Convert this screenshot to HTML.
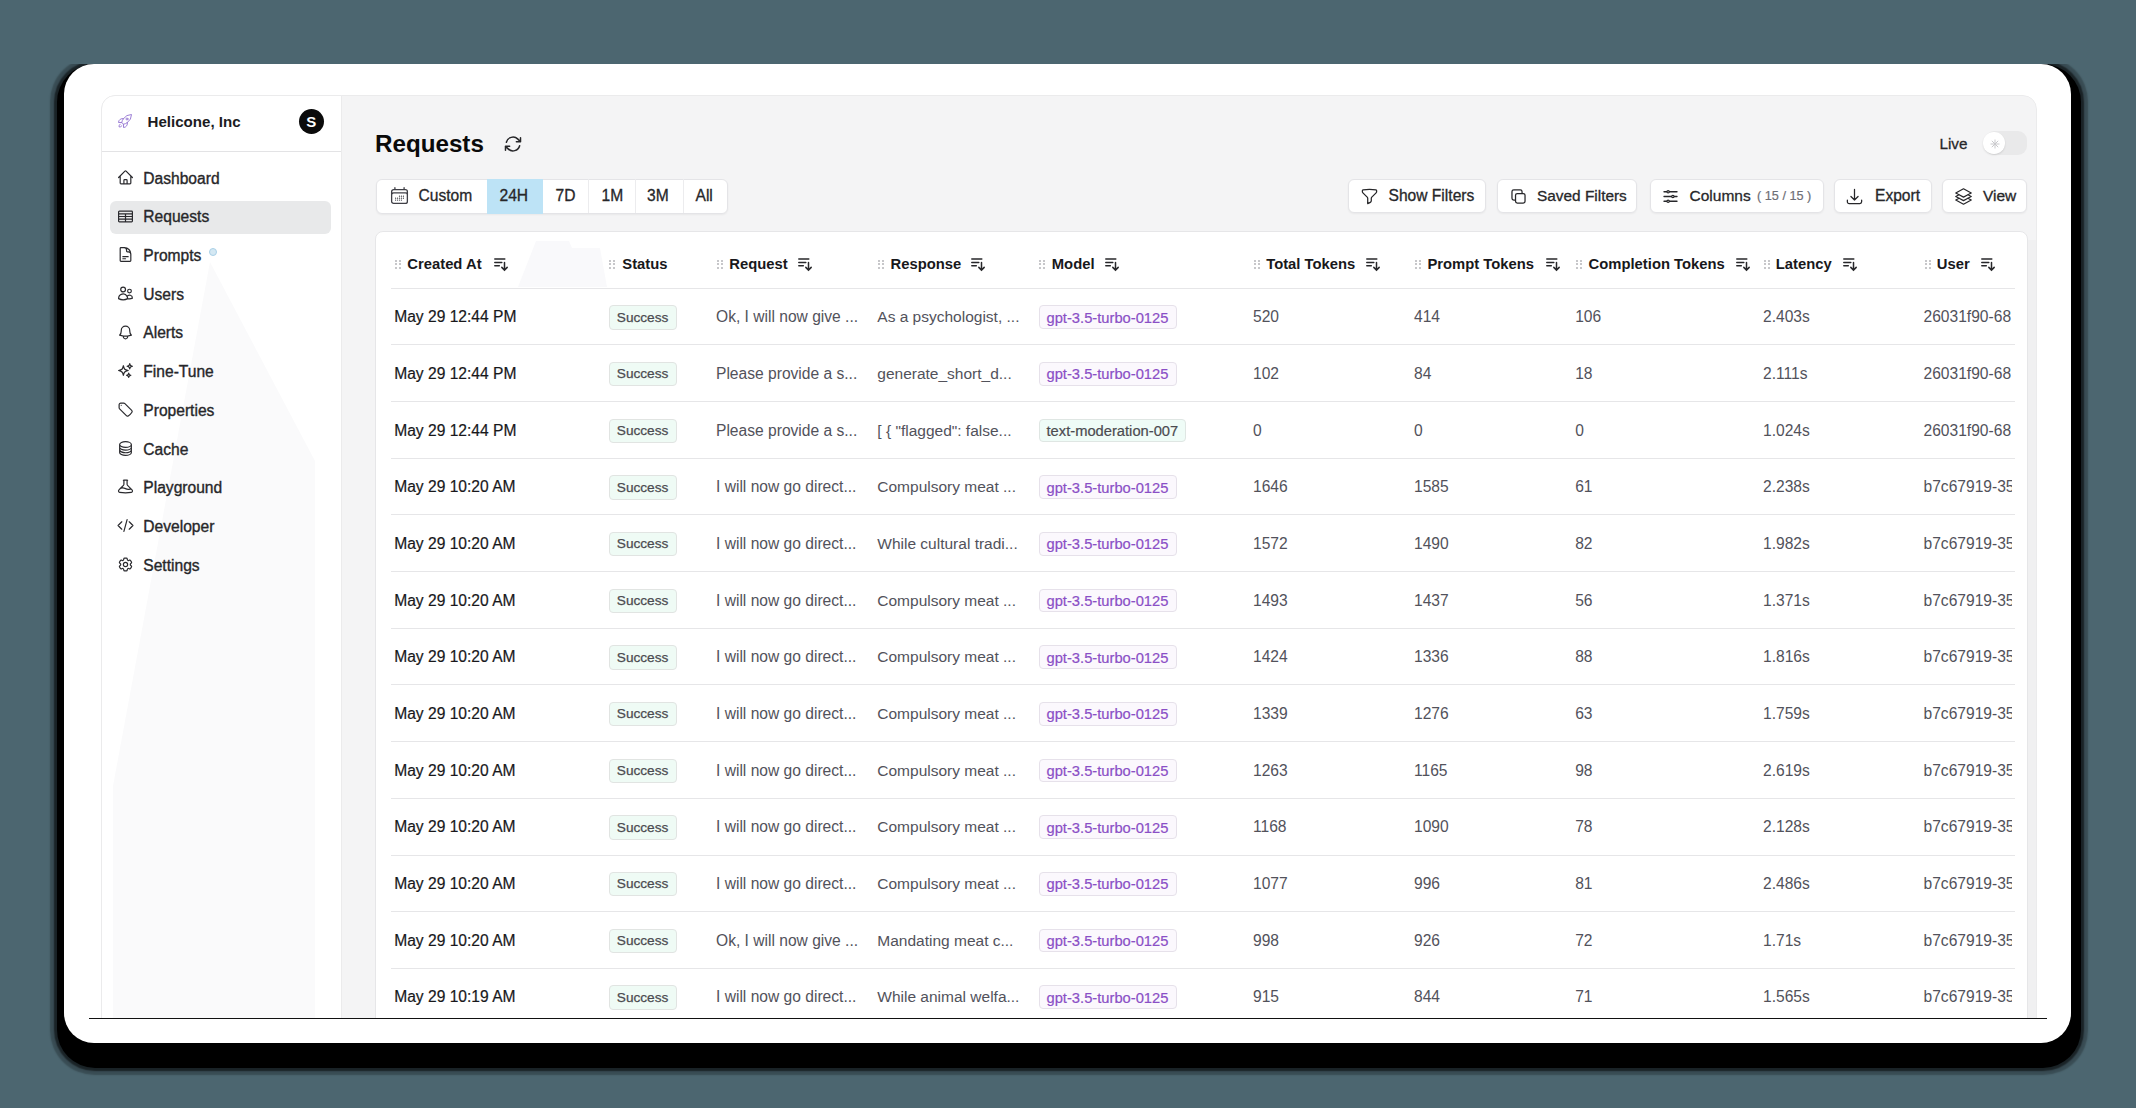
<!DOCTYPE html><html><head><meta charset="utf-8"><style>
*{margin:0;padding:0;box-sizing:border-box}
html,body{width:2136px;height:1108px;overflow:hidden}
body{background:#4c6670;font-family:"Liberation Sans",sans-serif;position:relative}
.t{position:absolute;white-space:nowrap}
.a{position:absolute}
svg{position:absolute;overflow:visible}
</style></head><body>
<div class="a" style="left:0;top:64px;width:2136px;height:1044px;overflow:hidden"><div class="a" style="left:57px;top:0px;width:2024px;height:1004px;border-radius:38px;background:#000;box-shadow:0 0 1.5px 3px rgba(0,0,0,.55),0 0 1.5px 6.5px rgba(0,0,0,.25)"></div></div>
<div class="a" style="left:64px;top:64px;width:2007px;height:979px;border-radius:30px;background:#fff"></div>
<div class="a" style="left:101px;top:95px;width:1936px;height:923px;overflow:hidden;border-radius:14px 14px 0 0">
<div class="a" style="left:-101px;top:-95px;width:2136px;height:1108px">
<div class="a" style="left:101px;top:95px;width:1936px;height:1000px;background:#f4f4f5;border:1.5px solid #ebebec;border-radius:14px"></div>
<div class="a" style="left:101px;top:95px;width:241px;height:1000px;background:#fff;border:1.5px solid #ebebec;border-right:1px solid #ebebec;border-radius:14px 0 0 14px"></div>
<svg width="2136" height="1108" style="left:0;top:0"><polygon points="210,262 315,461 315,1020 113,1020 113,786" fill="#fafafb"/></svg>
<div class="a" style="left:102px;top:151px;width:239px;height:1px;background:#e3e3e5"></div>
<svg width="16" height="16" viewBox="0 0 24 24" style="left:117px;top:113px" fill="none" stroke="#9d7fd6" stroke-width="1.5" stroke-linecap="round" stroke-linejoin="round"><path d="M15.59 14.37a6 6 0 0 1-5.84 7.38v-4.8m5.84-2.58a14.98 14.98 0 0 0 6.16-12.12A14.98 14.98 0 0 0 9.631 8.41m5.96 5.96a14.926 14.926 0 0 1-5.841 2.58m-.119-8.54a6 6 0 0 0-7.381 5.84h4.8m2.581-5.84a14.927 14.927 0 0 0-2.58 5.84m2.699 2.7c-.103.021-.207.041-.311.06a15.09 15.09 0 0 1-2.448-2.448 14.9 14.9 0 0 1 .06-.312m-2.24 2.39a4.493 4.493 0 0 0-1.757 4.306 4.493 4.493 0 0 0 4.306-1.758M16.5 9a1.5 1.5 0 1 1-3 0 1.5 1.5 0 0 1 3 0Z"/></svg>
<div class="t" style="left:147.50px;top:109.68px;height:24px;line-height:24px;font-size:15.1px;color:#1c1c1f;font-weight:bold;">Helicone, Inc</div>
<div class="a" style="left:298.5px;top:109px;width:25px;height:25px;border-radius:50%;background:#0b0b0b"></div>
<div class="t" style="left:304.30px;top:109.78px;height:24px;line-height:24px;font-size:15px;color:#fff;font-weight:bold;width:14px;text-align:center;">S</div>
<div class="a" style="left:109.5px;top:200.5px;width:221px;height:33px;border-radius:6px;background:#e8e9ea"></div>
<svg width="17" height="17" viewBox="0 0 24 24" style="left:117px;top:168.80px" fill="none" stroke="#2a2a2e" stroke-width="1.7" stroke-linecap="round" stroke-linejoin="round"><path d="m2.25 12 8.954-8.955c.44-.439 1.152-.439 1.591 0L21.75 12M4.5 9.75v10.125c0 .621.504 1.125 1.125 1.125H9.75v-4.875c0-.621.504-1.125 1.125-1.125h2.25c.621 0 1.125.504 1.125 1.125V21h4.125c.621 0 1.125-.504 1.125-1.125V9.75M8.25 21h8.25"/></svg>
<div class="t" style="left:143.30px;top:166.68px;height:24px;line-height:24px;font-size:15.6px;color:#27272a;font-weight:normal;-webkit-text-stroke:0.35px #27272a;">Dashboard</div>
<svg width="17" height="17" viewBox="0 0 24 24" style="left:117px;top:207.50px" fill="none" stroke="#2a2a2e" stroke-width="1.7" stroke-linecap="round" stroke-linejoin="round"><path d="M3.375 19.5h17.25m-17.25 0a1.125 1.125 0 0 1-1.125-1.125M3.375 19.5h7.5c.621 0 1.125-.504 1.125-1.125m-9.75 0V5.625m0 12.75v-1.5c0-.621.504-1.125 1.125-1.125m18.375 2.625V5.625m0 12.75c0 .621-.504 1.125-1.125 1.125m1.125-1.125v-1.5c0-.621-.504-1.125-1.125-1.125m0 3.75h-7.5A1.125 1.125 0 0 1 12 18.375m9.75-12.75c0-.621-.504-1.125-1.125-1.125H3.375c-.621 0-1.125.504-1.125 1.125m19.5 0v1.5c0 .621-.504 1.125-1.125 1.125M2.25 5.625v1.5c0 .621.504 1.125 1.125 1.125m0 0h17.25m-17.25 0h7.5c.621 0 1.125.504 1.125 1.125M3.375 8.25c-.621 0-1.125.504-1.125 1.125v1.5c0 .621.504 1.125 1.125 1.125m17.25-3.75h-7.5c-.621 0-1.125.504-1.125 1.125m8.625-1.125c.621 0 1.125.504 1.125 1.125v1.5c0 .621-.504 1.125-1.125 1.125m-17.25 0h7.5m-7.5 0c-.621 0-1.125.504-1.125 1.125v1.5c0 .621.504 1.125 1.125 1.125M12 10.875v-1.5m0 1.5c0 .621-.504 1.125-1.125 1.125M12 10.875c0 .621.504 1.125 1.125 1.125m-2.25 0c.621 0 1.125.504 1.125 1.125M13.125 12h7.5m-7.5 0c-.621 0-1.125.504-1.125 1.125M20.625 12c.621 0 1.125.504 1.125 1.125v1.5c0 .621-.504 1.125-1.125 1.125m-17.25 0h7.5M12 14.625v-1.5m0 1.5c0 .621-.504 1.125-1.125 1.125M12 14.625c0 .621.504 1.125 1.125 1.125m-2.25 0c.621 0 1.125.504 1.125 1.125m0 1.5v-1.5m0 0c0-.621.504-1.125 1.125-1.125m0 0h7.5"/></svg>
<div class="t" style="left:143.30px;top:205.38px;height:24px;line-height:24px;font-size:15.6px;color:#27272a;font-weight:normal;-webkit-text-stroke:0.35px #27272a;">Requests</div>
<svg width="17" height="17" viewBox="0 0 24 24" style="left:117px;top:246.20px" fill="none" stroke="#2a2a2e" stroke-width="1.7" stroke-linecap="round" stroke-linejoin="round"><path d="M19.5 14.25v-2.625a3.375 3.375 0 0 0-3.375-3.375h-1.5A1.125 1.125 0 0 1 13.5 7.125v-1.5a3.375 3.375 0 0 0-3.375-3.375H8.25m0 12.75h7.5m-7.5 3H12M10.5 2.25H5.625c-.621 0-1.125.504-1.125 1.125v17.25c0 .621.504 1.125 1.125 1.125h12.75c.621 0 1.125-.504 1.125-1.125V11.25a9 9 0 0 0-9-9Z"/></svg>
<div class="t" style="left:143.30px;top:244.08px;height:24px;line-height:24px;font-size:15.6px;color:#27272a;font-weight:normal;-webkit-text-stroke:0.35px #27272a;">Prompts</div>
<svg width="17" height="17" viewBox="0 0 24 24" style="left:117px;top:284.90px" fill="none" stroke="#2a2a2e" stroke-width="1.7" stroke-linecap="round" stroke-linejoin="round"><path d="M15 19.128a9.38 9.38 0 0 0 2.625.372 9.337 9.337 0 0 0 4.121-.952 4.125 4.125 0 0 0-7.533-2.493M15 19.128v-.003c0-1.113-.285-2.16-.786-3.07M15 19.128v.106A12.318 12.318 0 0 1 8.624 21c-2.331 0-4.512-.645-6.374-1.766l-.001-.109a6.375 6.375 0 0 1 11.964-3.07M12 6.375a3.375 3.375 0 1 1-6.75 0 3.375 3.375 0 0 1 6.75 0Zm8.25 2.25a2.625 2.625 0 1 1-5.25 0 2.625 2.625 0 0 1 5.25 0Z"/></svg>
<div class="t" style="left:143.30px;top:282.78px;height:24px;line-height:24px;font-size:15.6px;color:#27272a;font-weight:normal;-webkit-text-stroke:0.35px #27272a;">Users</div>
<svg width="17" height="17" viewBox="0 0 24 24" style="left:117px;top:323.60px" fill="none" stroke="#2a2a2e" stroke-width="1.7" stroke-linecap="round" stroke-linejoin="round"><path d="M14.857 17.082a23.848 23.848 0 0 0 5.454-1.31A8.967 8.967 0 0 1 18 9.75V9A6 6 0 0 0 6 9v.75a8.967 8.967 0 0 1-2.312 6.022c1.733.64 3.56 1.085 5.455 1.31m5.714 0a24.255 24.255 0 0 1-5.714 0m5.714 0a3 3 0 1 1-5.714 0"/></svg>
<div class="t" style="left:143.30px;top:321.48px;height:24px;line-height:24px;font-size:15.6px;color:#27272a;font-weight:normal;-webkit-text-stroke:0.35px #27272a;">Alerts</div>
<svg width="17" height="17" viewBox="0 0 24 24" style="left:117px;top:362.30px" fill="none" stroke="#2a2a2e" stroke-width="1.7" stroke-linecap="round" stroke-linejoin="round"><path d="M9.813 15.904 9 18.75l-.813-2.846a4.5 4.5 0 0 0-3.09-3.09L2.25 12l2.846-.813a4.5 4.5 0 0 0 3.09-3.09L9 5.25l.813 2.846a4.5 4.5 0 0 0 3.09 3.09L15.75 12l-2.846.813a4.5 4.5 0 0 0-3.09 3.09ZM18.259 8.715 18 9.75l-.259-1.035a3.375 3.375 0 0 0-2.455-2.456L14.25 6l1.036-.259a3.375 3.375 0 0 0 2.455-2.456L18 2.25l.259 1.035a3.375 3.375 0 0 0 2.456 2.456L21.75 6l-1.035.259a3.375 3.375 0 0 0-2.456 2.456ZM16.894 20.567 16.5 21.75l-.394-1.183a2.25 2.25 0 0 0-1.423-1.423L13.5 18.75l1.183-.394a2.25 2.25 0 0 0 1.423-1.423l.394-1.183.394 1.183a2.25 2.25 0 0 0 1.423 1.423l1.183.394-1.183.394a2.25 2.25 0 0 0-1.423 1.423Z"/></svg>
<div class="t" style="left:143.30px;top:360.18px;height:24px;line-height:24px;font-size:15.6px;color:#27272a;font-weight:normal;-webkit-text-stroke:0.35px #27272a;">Fine-Tune</div>
<svg width="17" height="17" viewBox="0 0 24 24" style="left:117px;top:401.00px" fill="none" stroke="#2a2a2e" stroke-width="1.7" stroke-linecap="round" stroke-linejoin="round"><path d="M9.568 3H5.25A2.25 2.25 0 0 0 3 5.25v4.318c0 .597.237 1.17.659 1.591l9.581 9.581c.699.699 1.78.872 2.607.33a18.095 18.095 0 0 0 5.223-5.223c.542-.827.369-1.908-.33-2.607L11.16 3.66A2.25 2.25 0 0 0 9.568 3Z"/><path d="M6 6h.008v.008H6V6Z"/></svg>
<div class="t" style="left:143.30px;top:398.88px;height:24px;line-height:24px;font-size:15.6px;color:#27272a;font-weight:normal;-webkit-text-stroke:0.35px #27272a;">Properties</div>
<svg width="17" height="17" viewBox="0 0 24 24" style="left:117px;top:439.70px" fill="none" stroke="#2a2a2e" stroke-width="1.7" stroke-linecap="round" stroke-linejoin="round"><path d="M20.25 6.375c0 2.278-3.694 4.125-8.25 4.125S3.75 8.653 3.75 6.375m16.5 0c0-2.278-3.694-4.125-8.25-4.125S3.75 4.097 3.75 6.375m16.5 0v11.25c0 2.278-3.694 4.125-8.25 4.125s-8.25-1.847-8.25-4.125V6.375m16.5 0v3.75m-16.5-3.75v3.75m16.5 0v3.75C20.25 16.153 16.556 18 12 18s-8.25-1.847-8.25-4.125v-3.75m16.5 0c0 2.278-3.694 4.125-8.25 4.125s-8.25-1.847-8.25-4.125"/></svg>
<div class="t" style="left:143.30px;top:437.58px;height:24px;line-height:24px;font-size:15.6px;color:#27272a;font-weight:normal;-webkit-text-stroke:0.35px #27272a;">Cache</div>
<svg width="17" height="17" viewBox="0 0 24 24" style="left:117px;top:478.40px" fill="none" stroke="#2a2a2e" stroke-width="1.7" stroke-linecap="round" stroke-linejoin="round"><path d="M9.75 3.104v5.714a2.25 2.25 0 0 1-.659 1.591L5 14.5M9.75 3.104c-.251.023-.501.05-.75.082m.75-.082a24.301 24.301 0 0 1 4.5 0m0 0v5.714c0 .597.237 1.17.659 1.591L19.8 15.3M14.25 3.104c.251.023.501.05.75.082M19.8 15.3l-1.57.393A9.065 9.065 0 0 1 12 15a9.065 9.065 0 0 0-6.23-.693L5 14.5m14.8.8 1.402 1.402c1.232 1.232.65 3.318-1.067 3.611A48.309 48.309 0 0 1 12 21c-2.773 0-5.491-.235-8.135-.687-1.718-.293-2.3-2.379-1.067-3.61L5 14.5"/></svg>
<div class="t" style="left:143.30px;top:476.28px;height:24px;line-height:24px;font-size:15.6px;color:#27272a;font-weight:normal;-webkit-text-stroke:0.35px #27272a;">Playground</div>
<svg width="17" height="17" viewBox="0 0 24 24" style="left:117px;top:517.10px" fill="none" stroke="#2a2a2e" stroke-width="1.7" stroke-linecap="round" stroke-linejoin="round"><path d="M17.25 6.75 22.5 12l-5.25 5.25m-10.5 0L1.5 12l5.25-5.25m7.5-3-4.5 16.5"/></svg>
<div class="t" style="left:143.30px;top:514.98px;height:24px;line-height:24px;font-size:15.6px;color:#27272a;font-weight:normal;-webkit-text-stroke:0.35px #27272a;">Developer</div>
<svg width="17" height="17" viewBox="0 0 24 24" style="left:117px;top:555.80px" fill="none" stroke="#2a2a2e" stroke-width="1.7" stroke-linecap="round" stroke-linejoin="round"><path d="M9.594 3.94c.09-.542.56-.94 1.11-.94h2.593c.55 0 1.02.398 1.11.94l.213 1.281c.063.374.313.686.645.87.074.04.147.083.22.127.325.196.72.257 1.075.124l1.217-.456a1.125 1.125 0 0 1 1.37.49l1.296 2.247a1.125 1.125 0 0 1-.26 1.431l-1.003.827c-.293.241-.438.613-.43.992a7.723 7.723 0 0 1 0 .255c-.008.378.137.75.43.991l1.004.827c.424.35.534.955.26 1.43l-1.298 2.247a1.125 1.125 0 0 1-1.369.491l-1.217-.456c-.355-.133-.75-.072-1.076.124a6.47 6.47 0 0 1-.22.128c-.331.183-.581.495-.644.869l-.213 1.281c-.09.543-.56.94-1.11.94h-2.594c-.55 0-1.019-.398-1.11-.94l-.213-1.281c-.062-.374-.312-.686-.644-.87a6.52 6.52 0 0 1-.22-.127c-.325-.196-.72-.257-1.076-.124l-1.217.456a1.125 1.125 0 0 1-1.369-.49l-1.297-2.247a1.125 1.125 0 0 1 .26-1.431l1.004-.827c.292-.24.437-.613.43-.991a6.932 6.932 0 0 1 0-.255c.007-.38-.138-.751-.43-.992l-1.004-.827a1.125 1.125 0 0 1-.26-1.43l1.297-2.247a1.125 1.125 0 0 1 1.37-.491l1.216.456c.356.133.751.072 1.076-.124.072-.044.146-.086.22-.128.332-.183.582-.495.644-.869l.214-1.28Z"/><path d="M15 12a3 3 0 1 1-6 0 3 3 0 0 1 6 0Z"/></svg>
<div class="t" style="left:143.30px;top:553.68px;height:24px;line-height:24px;font-size:15.6px;color:#27272a;font-weight:normal;-webkit-text-stroke:0.35px #27272a;">Settings</div>
<div class="a" style="left:209px;top:248px;width:8px;height:8px;border-radius:50%;background:#d4e8f3;border:1.5px solid #a9d0e6"></div>
<div class="t" style="left:375.00px;top:128.38px;height:32px;line-height:32px;font-size:24.2px;color:#0a0a0a;font-weight:bold;">Requests</div>
<svg width="20" height="20" viewBox="0 0 24 24" style="left:502.5px;top:133.5px" fill="none" stroke="#27272a" stroke-width="1.8" stroke-linecap="round" stroke-linejoin="round"><path d="M16.023 9.348h4.992v-.001M2.985 19.644v-4.992m0 0h4.992m-4.993 0 3.181 3.183a8.25 8.25 0 0 0 13.803-3.7M4.031 9.865a8.25 8.25 0 0 1 13.803-3.7l3.181 3.182m0-4.991v4.99"/></svg>
<div class="t" style="left:1939.50px;top:131.98px;height:24px;line-height:24px;font-size:15.26px;color:#27272a;font-weight:normal;-webkit-text-stroke:0.3px currentColor;">Live</div>
<div class="a" style="left:1985px;top:131px;width:42px;height:24px;border-radius:9px;background:#e9e9ea"></div>
<div class="a" style="left:1983px;top:132px;width:21.5px;height:21.5px;border-radius:50%;background:#fff;box-shadow:0 1px 2px rgba(0,0,0,.12)"></div>
<svg width="10" height="10" viewBox="0 0 10 10" style="left:1989.5px;top:138.5px" stroke="#c9c9cc" stroke-width="1"><path d="M5 0.5v9M0.5 5h9M1.8 1.8l6.4 6.4M8.2 1.8l-6.4 6.4"/></svg>
<div class="a" style="left:375.5px;top:178.5px;width:352px;height:35px;border-radius:6px;background:#fff;border:1px solid #e4e4e7;box-shadow:0 1px 2px rgba(0,0,0,.05)"></div>
<div class="a" style="left:486.5px;top:178.5px;width:56px;height:35px;background:#bde3f6"></div>
<div class="a" style="left:588px;top:179px;width:1px;height:34px;background:#ececee"></div>
<div class="a" style="left:635px;top:179px;width:1px;height:34px;background:#ececee"></div>
<div class="a" style="left:683px;top:179px;width:1px;height:34px;background:#ececee"></div>
<svg width="21" height="21" viewBox="0 0 24 24" style="left:388.5px;top:185px" fill="none" stroke="#3f3f46" stroke-width="1.5" stroke-linecap="round" stroke-linejoin="round"><path d="M6.75 3v2.25M17.25 3v2.25M3 18.75V7.5a2.25 2.25 0 0 1 2.25-2.25h13.5A2.25 2.25 0 0 1 21 7.5v11.25m-18 0A2.25 2.25 0 0 0 5.25 21h13.5A2.25 2.25 0 0 0 21 18.75m-18 0v-7.5A2.25 2.25 0 0 1 5.25 9h13.5A2.25 2.25 0 0 1 21 11.25v7.5m-9-6h.008v.008H12v-.008ZM12 15h.008v.008H12V15Zm0 2.25h.008v.008H12v-.008ZM9.75 15h.008v.008H9.75V15Zm0 2.25h.008v.008H9.75v-.008ZM7.5 15h.008v.008H7.5V15Zm0 2.25h.008v.008H7.5v-.008Zm6.75-4.5h.008v.008h-.008v-.008Zm0 2.25h.008v.008h-.008V15Zm0 2.25h.008v.008h-.008v-.008Zm2.25-4.5h.008v.008H16.5v-.008Zm0 2.25h.008v.008H16.5V15Z"/></svg>
<div class="t" style="left:418.50px;top:184.48px;height:24px;line-height:24px;font-size:15.6px;color:#27272a;font-weight:normal;-webkit-text-stroke:0.3px currentColor;">Custom</div>
<div class="t" style="left:499.50px;top:184.48px;height:24px;line-height:24px;font-size:15.6px;color:#27272a;font-weight:normal;-webkit-text-stroke:0.3px currentColor;">24H</div>
<div class="t" style="left:555.50px;top:184.48px;height:24px;line-height:24px;font-size:15.6px;color:#27272a;font-weight:normal;-webkit-text-stroke:0.3px currentColor;">7D</div>
<div class="t" style="left:601.50px;top:184.48px;height:24px;line-height:24px;font-size:15.6px;color:#27272a;font-weight:normal;-webkit-text-stroke:0.3px currentColor;">1M</div>
<div class="t" style="left:647.00px;top:184.48px;height:24px;line-height:24px;font-size:15.6px;color:#27272a;font-weight:normal;-webkit-text-stroke:0.3px currentColor;">3M</div>
<div class="t" style="left:695.50px;top:184.48px;height:24px;line-height:24px;font-size:15.6px;color:#27272a;font-weight:normal;-webkit-text-stroke:0.3px currentColor;">All</div>
<div class="a" style="left:1348px;top:179px;width:138px;height:34px;border-radius:6px;background:#fff;border:1px solid #e4e4e7;box-shadow:0 1px 2px rgba(0,0,0,.05)"></div>
<div class="a" style="left:1496.5px;top:179px;width:140.5px;height:34px;border-radius:6px;background:#fff;border:1px solid #e4e4e7;box-shadow:0 1px 2px rgba(0,0,0,.05)"></div>
<div class="a" style="left:1649.5px;top:179px;width:174.5px;height:34px;border-radius:6px;background:#fff;border:1px solid #e4e4e7;box-shadow:0 1px 2px rgba(0,0,0,.05)"></div>
<div class="a" style="left:1833.5px;top:179px;width:98.5px;height:34px;border-radius:6px;background:#fff;border:1px solid #e4e4e7;box-shadow:0 1px 2px rgba(0,0,0,.05)"></div>
<div class="a" style="left:1941.5px;top:179px;width:85.0px;height:34px;border-radius:6px;background:#fff;border:1px solid #e4e4e7;box-shadow:0 1px 2px rgba(0,0,0,.05)"></div>
<svg width="19" height="19" viewBox="0 0 24 24" style="left:1359.5px;top:186.5px" fill="none" stroke="#27272a" stroke-width="1.6" stroke-linecap="round" stroke-linejoin="round"><path d="M12 3c2.755 0 5.455.232 8.083.678.533.09.917.556.917 1.096v1.044a2.25 2.25 0 0 1-.659 1.591l-5.432 5.432a2.25 2.25 0 0 0-.659 1.591v2.927a2.25 2.25 0 0 1-1.244 2.013L9.75 21v-6.568a2.25 2.25 0 0 0-.659-1.591L3.659 7.409A2.25 2.25 0 0 1 3 5.818V4.774c0-.54.384-1.006.917-1.096A48.32 48.32 0 0 1 12 3Z"/></svg>
<div class="t" style="left:1388.50px;top:184.48px;height:24px;line-height:24px;font-size:15.6px;color:#27272a;font-weight:normal;-webkit-text-stroke:0.3px currentColor;">Show Filters</div>
<svg width="19" height="19" viewBox="0 0 24 24" style="left:1508.5px;top:186.5px" fill="none" stroke="#27272a" stroke-width="1.6" stroke-linecap="round" stroke-linejoin="round"><path d="M16.5 8.25V6a2.25 2.25 0 0 0-2.25-2.25H6A2.25 2.25 0 0 0 3.75 6v8.25A2.25 2.25 0 0 0 6 16.5h2.25m8.25-8.25H18a2.25 2.25 0 0 1 2.25 2.25V18A2.25 2.25 0 0 1 18 20.25h-7.5A2.25 2.25 0 0 1 8.25 18v-1.5m8.25-8.25h-6a2.25 2.25 0 0 0-2.25 2.25v6"/></svg>
<div class="t" style="left:1537.00px;top:184.48px;height:24px;line-height:24px;font-size:15.4px;color:#27272a;font-weight:normal;-webkit-text-stroke:0.3px currentColor;">Saved Filters</div>
<svg width="19" height="19" viewBox="0 0 24 24" style="left:1660.5px;top:186.5px" fill="none" stroke="#27272a" stroke-width="1.6" stroke-linecap="round" stroke-linejoin="round"><path d="M10.5 6h9.75M10.5 6a1.5 1.5 0 1 1-3 0m3 0a1.5 1.5 0 1 0-3 0M3.75 6H7.5m3 12h9.75m-9.75 0a1.5 1.5 0 0 1-3 0m3 0a1.5 1.5 0 0 0-3 0m-3.75 0H7.5m9-6h3.75m-3.75 0a1.5 1.5 0 0 1-3 0m3 0a1.5 1.5 0 0 0-3 0m-9.75 0h9.75"/></svg>
<div class="t" style="left:1689.50px;top:184.48px;height:24px;line-height:24px;font-size:15.5px;color:#27272a;font-weight:normal;-webkit-text-stroke:0.3px currentColor;">Columns</div>
<div class="t" style="left:1757.00px;top:184.48px;height:24px;line-height:24px;font-size:12.7px;color:#6e6e75;font-weight:normal;-webkit-text-stroke:0.2px currentColor;">( 15 / 15 )</div>
<svg width="19" height="19" viewBox="0 0 24 24" style="left:1844.5px;top:186.5px" fill="none" stroke="#27272a" stroke-width="1.6" stroke-linecap="round" stroke-linejoin="round"><path d="M3 16.5v2.25A2.25 2.25 0 0 0 5.25 21h13.5A2.25 2.25 0 0 0 21 18.75V16.5M16.5 12 12 16.5m0 0L7.5 12m4.5 4.5V3"/></svg>
<div class="t" style="left:1875.00px;top:184.48px;height:24px;line-height:24px;font-size:15.6px;color:#27272a;font-weight:normal;-webkit-text-stroke:0.3px currentColor;">Export</div>
<svg width="19" height="19" viewBox="0 0 24 24" style="left:1953.5px;top:186.5px" fill="none" stroke="#27272a" stroke-width="1.6" stroke-linecap="round" stroke-linejoin="round"><path d="M6.429 9.75 2.25 12l4.179 2.25m0-4.5 5.571 3 5.571-3m-11.142 0L2.25 7.5 12 2.25l9.75 5.25-4.179 2.25m0 0L21.75 12l-4.179 2.25m0 0 4.179 2.25L12 21.75 2.25 16.5l4.179-2.25m11.142 0-5.571 3-5.571-3"/></svg>
<div class="t" style="left:1983.00px;top:184.48px;height:24px;line-height:24px;font-size:15.5px;color:#27272a;font-weight:normal;-webkit-text-stroke:0.3px currentColor;">View</div>
<div class="a" style="left:375px;top:231px;width:1653px;height:900px;border-radius:8px;background:#fff;border:1.5px solid #e6e6e8"></div>
<svg width="2136" height="1108" style="left:0;top:0"><polygon points="536,241 569,241 572,248 600,248 607,287 518,287" fill="#f9f9fb"/></svg>
<div class="a" style="left:2028px;top:240px;width:8px;height:800px;background:#f0f0f1"></div>
<div class="a" style="left:395.20px;top:259.70px;width:2px;height:2px;border-radius:50%;background:#b4b4b9"></div>
<div class="a" style="left:399.20px;top:259.70px;width:2px;height:2px;border-radius:50%;background:#b4b4b9"></div>
<div class="a" style="left:395.20px;top:263.40px;width:2px;height:2px;border-radius:50%;background:#b4b4b9"></div>
<div class="a" style="left:399.20px;top:263.40px;width:2px;height:2px;border-radius:50%;background:#b4b4b9"></div>
<div class="a" style="left:395.20px;top:267.10px;width:2px;height:2px;border-radius:50%;background:#b4b4b9"></div>
<div class="a" style="left:399.20px;top:267.10px;width:2px;height:2px;border-radius:50%;background:#b4b4b9"></div>
<div class="t" style="left:407.30px;top:252.18px;height:24px;line-height:24px;font-size:14.8px;color:#18181b;font-weight:bold;">Created At</div>
<svg width="15" height="13" viewBox="0 0 15 13" style="left:494.00px;top:257.5px" fill="none" stroke="#27272a" stroke-width="1.5" stroke-linecap="round"><path d="M0.8 1h10M0.8 4.4h7M0.8 7.8h4.5M10.5 4.6v7.4M7.8 9.4l2.7 2.7 2.7-2.7"/></svg>
<div class="a" style="left:609.20px;top:259.70px;width:2px;height:2px;border-radius:50%;background:#b4b4b9"></div>
<div class="a" style="left:613.20px;top:259.70px;width:2px;height:2px;border-radius:50%;background:#b4b4b9"></div>
<div class="a" style="left:609.20px;top:263.40px;width:2px;height:2px;border-radius:50%;background:#b4b4b9"></div>
<div class="a" style="left:613.20px;top:263.40px;width:2px;height:2px;border-radius:50%;background:#b4b4b9"></div>
<div class="a" style="left:609.20px;top:267.10px;width:2px;height:2px;border-radius:50%;background:#b4b4b9"></div>
<div class="a" style="left:613.20px;top:267.10px;width:2px;height:2px;border-radius:50%;background:#b4b4b9"></div>
<div class="t" style="left:622.30px;top:252.18px;height:24px;line-height:24px;font-size:14.8px;color:#18181b;font-weight:bold;">Status</div>
<div class="a" style="left:717.00px;top:259.70px;width:2px;height:2px;border-radius:50%;background:#b4b4b9"></div>
<div class="a" style="left:721.00px;top:259.70px;width:2px;height:2px;border-radius:50%;background:#b4b4b9"></div>
<div class="a" style="left:717.00px;top:263.40px;width:2px;height:2px;border-radius:50%;background:#b4b4b9"></div>
<div class="a" style="left:721.00px;top:263.40px;width:2px;height:2px;border-radius:50%;background:#b4b4b9"></div>
<div class="a" style="left:717.00px;top:267.10px;width:2px;height:2px;border-radius:50%;background:#b4b4b9"></div>
<div class="a" style="left:721.00px;top:267.10px;width:2px;height:2px;border-radius:50%;background:#b4b4b9"></div>
<div class="t" style="left:729.30px;top:252.18px;height:24px;line-height:24px;font-size:14.8px;color:#18181b;font-weight:bold;">Request</div>
<svg width="15" height="13" viewBox="0 0 15 13" style="left:798.40px;top:257.5px" fill="none" stroke="#27272a" stroke-width="1.5" stroke-linecap="round"><path d="M0.8 1h10M0.8 4.4h7M0.8 7.8h4.5M10.5 4.6v7.4M7.8 9.4l2.7 2.7 2.7-2.7"/></svg>
<div class="a" style="left:878.00px;top:259.70px;width:2px;height:2px;border-radius:50%;background:#b4b4b9"></div>
<div class="a" style="left:882.00px;top:259.70px;width:2px;height:2px;border-radius:50%;background:#b4b4b9"></div>
<div class="a" style="left:878.00px;top:263.40px;width:2px;height:2px;border-radius:50%;background:#b4b4b9"></div>
<div class="a" style="left:882.00px;top:263.40px;width:2px;height:2px;border-radius:50%;background:#b4b4b9"></div>
<div class="a" style="left:878.00px;top:267.10px;width:2px;height:2px;border-radius:50%;background:#b4b4b9"></div>
<div class="a" style="left:882.00px;top:267.10px;width:2px;height:2px;border-radius:50%;background:#b4b4b9"></div>
<div class="t" style="left:890.50px;top:252.18px;height:24px;line-height:24px;font-size:14.8px;color:#18181b;font-weight:bold;">Response</div>
<svg width="15" height="13" viewBox="0 0 15 13" style="left:971.40px;top:257.5px" fill="none" stroke="#27272a" stroke-width="1.5" stroke-linecap="round"><path d="M0.8 1h10M0.8 4.4h7M0.8 7.8h4.5M10.5 4.6v7.4M7.8 9.4l2.7 2.7 2.7-2.7"/></svg>
<div class="a" style="left:1039.20px;top:259.70px;width:2px;height:2px;border-radius:50%;background:#b4b4b9"></div>
<div class="a" style="left:1043.20px;top:259.70px;width:2px;height:2px;border-radius:50%;background:#b4b4b9"></div>
<div class="a" style="left:1039.20px;top:263.40px;width:2px;height:2px;border-radius:50%;background:#b4b4b9"></div>
<div class="a" style="left:1043.20px;top:263.40px;width:2px;height:2px;border-radius:50%;background:#b4b4b9"></div>
<div class="a" style="left:1039.20px;top:267.10px;width:2px;height:2px;border-radius:50%;background:#b4b4b9"></div>
<div class="a" style="left:1043.20px;top:267.10px;width:2px;height:2px;border-radius:50%;background:#b4b4b9"></div>
<div class="t" style="left:1051.80px;top:252.18px;height:24px;line-height:24px;font-size:14.8px;color:#18181b;font-weight:bold;">Model</div>
<svg width="15" height="13" viewBox="0 0 15 13" style="left:1105.00px;top:257.5px" fill="none" stroke="#27272a" stroke-width="1.5" stroke-linecap="round"><path d="M0.8 1h10M0.8 4.4h7M0.8 7.8h4.5M10.5 4.6v7.4M7.8 9.4l2.7 2.7 2.7-2.7"/></svg>
<div class="a" style="left:1254.20px;top:259.70px;width:2px;height:2px;border-radius:50%;background:#b4b4b9"></div>
<div class="a" style="left:1258.20px;top:259.70px;width:2px;height:2px;border-radius:50%;background:#b4b4b9"></div>
<div class="a" style="left:1254.20px;top:263.40px;width:2px;height:2px;border-radius:50%;background:#b4b4b9"></div>
<div class="a" style="left:1258.20px;top:263.40px;width:2px;height:2px;border-radius:50%;background:#b4b4b9"></div>
<div class="a" style="left:1254.20px;top:267.10px;width:2px;height:2px;border-radius:50%;background:#b4b4b9"></div>
<div class="a" style="left:1258.20px;top:267.10px;width:2px;height:2px;border-radius:50%;background:#b4b4b9"></div>
<div class="t" style="left:1266.20px;top:252.18px;height:24px;line-height:24px;font-size:14.8px;color:#18181b;font-weight:bold;">Total Tokens</div>
<svg width="15" height="13" viewBox="0 0 15 13" style="left:1366.00px;top:257.5px" fill="none" stroke="#27272a" stroke-width="1.5" stroke-linecap="round"><path d="M0.8 1h10M0.8 4.4h7M0.8 7.8h4.5M10.5 4.6v7.4M7.8 9.4l2.7 2.7 2.7-2.7"/></svg>
<div class="a" style="left:1415.20px;top:259.70px;width:2px;height:2px;border-radius:50%;background:#b4b4b9"></div>
<div class="a" style="left:1419.20px;top:259.70px;width:2px;height:2px;border-radius:50%;background:#b4b4b9"></div>
<div class="a" style="left:1415.20px;top:263.40px;width:2px;height:2px;border-radius:50%;background:#b4b4b9"></div>
<div class="a" style="left:1419.20px;top:263.40px;width:2px;height:2px;border-radius:50%;background:#b4b4b9"></div>
<div class="a" style="left:1415.20px;top:267.10px;width:2px;height:2px;border-radius:50%;background:#b4b4b9"></div>
<div class="a" style="left:1419.20px;top:267.10px;width:2px;height:2px;border-radius:50%;background:#b4b4b9"></div>
<div class="t" style="left:1427.40px;top:252.18px;height:24px;line-height:24px;font-size:14.8px;color:#18181b;font-weight:bold;">Prompt Tokens</div>
<svg width="15" height="13" viewBox="0 0 15 13" style="left:1546.00px;top:257.5px" fill="none" stroke="#27272a" stroke-width="1.5" stroke-linecap="round"><path d="M0.8 1h10M0.8 4.4h7M0.8 7.8h4.5M10.5 4.6v7.4M7.8 9.4l2.7 2.7 2.7-2.7"/></svg>
<div class="a" style="left:1576.40px;top:259.70px;width:2px;height:2px;border-radius:50%;background:#b4b4b9"></div>
<div class="a" style="left:1580.40px;top:259.70px;width:2px;height:2px;border-radius:50%;background:#b4b4b9"></div>
<div class="a" style="left:1576.40px;top:263.40px;width:2px;height:2px;border-radius:50%;background:#b4b4b9"></div>
<div class="a" style="left:1580.40px;top:263.40px;width:2px;height:2px;border-radius:50%;background:#b4b4b9"></div>
<div class="a" style="left:1576.40px;top:267.10px;width:2px;height:2px;border-radius:50%;background:#b4b4b9"></div>
<div class="a" style="left:1580.40px;top:267.10px;width:2px;height:2px;border-radius:50%;background:#b4b4b9"></div>
<div class="t" style="left:1588.60px;top:252.18px;height:24px;line-height:24px;font-size:14.8px;color:#18181b;font-weight:bold;">Completion Tokens</div>
<svg width="15" height="13" viewBox="0 0 15 13" style="left:1736.00px;top:257.5px" fill="none" stroke="#27272a" stroke-width="1.5" stroke-linecap="round"><path d="M0.8 1h10M0.8 4.4h7M0.8 7.8h4.5M10.5 4.6v7.4M7.8 9.4l2.7 2.7 2.7-2.7"/></svg>
<div class="a" style="left:1763.60px;top:259.70px;width:2px;height:2px;border-radius:50%;background:#b4b4b9"></div>
<div class="a" style="left:1767.60px;top:259.70px;width:2px;height:2px;border-radius:50%;background:#b4b4b9"></div>
<div class="a" style="left:1763.60px;top:263.40px;width:2px;height:2px;border-radius:50%;background:#b4b4b9"></div>
<div class="a" style="left:1767.60px;top:263.40px;width:2px;height:2px;border-radius:50%;background:#b4b4b9"></div>
<div class="a" style="left:1763.60px;top:267.10px;width:2px;height:2px;border-radius:50%;background:#b4b4b9"></div>
<div class="a" style="left:1767.60px;top:267.10px;width:2px;height:2px;border-radius:50%;background:#b4b4b9"></div>
<div class="t" style="left:1775.80px;top:252.18px;height:24px;line-height:24px;font-size:14.8px;color:#18181b;font-weight:bold;">Latency</div>
<svg width="15" height="13" viewBox="0 0 15 13" style="left:1843.40px;top:257.5px" fill="none" stroke="#27272a" stroke-width="1.5" stroke-linecap="round"><path d="M0.8 1h10M0.8 4.4h7M0.8 7.8h4.5M10.5 4.6v7.4M7.8 9.4l2.7 2.7 2.7-2.7"/></svg>
<div class="a" style="left:1925.40px;top:259.70px;width:2px;height:2px;border-radius:50%;background:#b4b4b9"></div>
<div class="a" style="left:1929.40px;top:259.70px;width:2px;height:2px;border-radius:50%;background:#b4b4b9"></div>
<div class="a" style="left:1925.40px;top:263.40px;width:2px;height:2px;border-radius:50%;background:#b4b4b9"></div>
<div class="a" style="left:1929.40px;top:263.40px;width:2px;height:2px;border-radius:50%;background:#b4b4b9"></div>
<div class="a" style="left:1925.40px;top:267.10px;width:2px;height:2px;border-radius:50%;background:#b4b4b9"></div>
<div class="a" style="left:1929.40px;top:267.10px;width:2px;height:2px;border-radius:50%;background:#b4b4b9"></div>
<div class="t" style="left:1936.80px;top:252.18px;height:24px;line-height:24px;font-size:14.8px;color:#18181b;font-weight:bold;">User</div>
<svg width="15" height="13" viewBox="0 0 15 13" style="left:1981.00px;top:257.5px" fill="none" stroke="#27272a" stroke-width="1.5" stroke-linecap="round"><path d="M0.8 1h10M0.8 4.4h7M0.8 7.8h4.5M10.5 4.6v7.4M7.8 9.4l2.7 2.7 2.7-2.7"/></svg>
<div class="a" style="left:391px;top:287.8px;width:1624px;height:1px;background:#e6e6e8"></div>
<div class="t" style="left:394.20px;top:305.38px;height:24px;line-height:24px;font-size:15.6px;color:#18181b;font-weight:normal;-webkit-text-stroke:0.2px currentColor;">May 29 12:44 PM</div>
<div class="a" style="left:609px;top:305.20px;width:68px;height:24.5px;border-radius:4px;background:#effbf5;border:1.2px solid #e1e4e2"></div>
<div class="t" style="left:616.80px;top:305.58px;height:24px;line-height:24px;font-size:13.65px;color:#4b4b50;font-weight:normal;-webkit-text-stroke:0.25px currentColor;">Success</div>
<div class="t" style="left:716.00px;top:305.38px;height:24px;line-height:24px;font-size:15.6px;color:#52525b;font-weight:normal;">Ok, I will now give ...</div>
<div class="t" style="left:877.30px;top:305.38px;height:24px;line-height:24px;font-size:15.5px;color:#52525b;font-weight:normal;">As a psychologist, ...</div>
<div class="a" style="left:1038.5px;top:305.40px;width:138px;height:23.5px;border-radius:4px;background:#fbf8fd;border:1.2px solid #e6e1ea"></div>
<div class="t" style="left:1046.50px;top:305.68px;height:24px;line-height:24px;font-size:14.72px;color:#8a4fc6;font-weight:normal;-webkit-text-stroke:0.2px currentColor;">gpt-3.5-turbo-0125</div>
<div class="t" style="left:1253.00px;top:305.38px;height:24px;line-height:24px;font-size:15.6px;color:#52525b;font-weight:normal;">520</div>
<div class="t" style="left:1414.00px;top:305.38px;height:24px;line-height:24px;font-size:15.6px;color:#52525b;font-weight:normal;">414</div>
<div class="t" style="left:1575.20px;top:305.38px;height:24px;line-height:24px;font-size:15.6px;color:#52525b;font-weight:normal;">106</div>
<div class="t" style="left:1763.00px;top:305.38px;height:24px;line-height:24px;font-size:15.6px;color:#52525b;font-weight:normal;">2.403s</div>
<div class="a" style="left:1923px;top:305.20px;width:88.5px;height:24px;overflow:hidden"><div class="t" style="left:0.50px;top:0.18px;height:24px;line-height:24px;font-size:15.6px;color:#52525b;font-weight:normal;">26031f90-68</div>
</div>
<div class="a" style="left:391px;top:344.47px;width:1624px;height:1px;background:#e6e6e8"></div>
<div class="t" style="left:394.20px;top:362.05px;height:24px;line-height:24px;font-size:15.6px;color:#18181b;font-weight:normal;-webkit-text-stroke:0.2px currentColor;">May 29 12:44 PM</div>
<div class="a" style="left:609px;top:361.87px;width:68px;height:24.5px;border-radius:4px;background:#effbf5;border:1.2px solid #e1e4e2"></div>
<div class="t" style="left:616.80px;top:362.25px;height:24px;line-height:24px;font-size:13.65px;color:#4b4b50;font-weight:normal;-webkit-text-stroke:0.25px currentColor;">Success</div>
<div class="t" style="left:716.00px;top:362.05px;height:24px;line-height:24px;font-size:15.6px;color:#52525b;font-weight:normal;">Please provide a s...</div>
<div class="t" style="left:877.30px;top:362.05px;height:24px;line-height:24px;font-size:15.5px;color:#52525b;font-weight:normal;">generate_short_d...</div>
<div class="a" style="left:1038.5px;top:362.07px;width:138px;height:23.5px;border-radius:4px;background:#fbf8fd;border:1.2px solid #e6e1ea"></div>
<div class="t" style="left:1046.50px;top:362.35px;height:24px;line-height:24px;font-size:14.72px;color:#8a4fc6;font-weight:normal;-webkit-text-stroke:0.2px currentColor;">gpt-3.5-turbo-0125</div>
<div class="t" style="left:1253.00px;top:362.05px;height:24px;line-height:24px;font-size:15.6px;color:#52525b;font-weight:normal;">102</div>
<div class="t" style="left:1414.00px;top:362.05px;height:24px;line-height:24px;font-size:15.6px;color:#52525b;font-weight:normal;">84</div>
<div class="t" style="left:1575.20px;top:362.05px;height:24px;line-height:24px;font-size:15.6px;color:#52525b;font-weight:normal;">18</div>
<div class="t" style="left:1763.00px;top:362.05px;height:24px;line-height:24px;font-size:15.6px;color:#52525b;font-weight:normal;">2.111s</div>
<div class="a" style="left:1923px;top:361.87px;width:88.5px;height:24px;overflow:hidden"><div class="t" style="left:0.50px;top:0.18px;height:24px;line-height:24px;font-size:15.6px;color:#52525b;font-weight:normal;">26031f90-68</div>
</div>
<div class="a" style="left:391px;top:401.14px;width:1624px;height:1px;background:#e6e6e8"></div>
<div class="t" style="left:394.20px;top:418.72px;height:24px;line-height:24px;font-size:15.6px;color:#18181b;font-weight:normal;-webkit-text-stroke:0.2px currentColor;">May 29 12:44 PM</div>
<div class="a" style="left:609px;top:418.54px;width:68px;height:24.5px;border-radius:4px;background:#effbf5;border:1.2px solid #e1e4e2"></div>
<div class="t" style="left:616.80px;top:418.92px;height:24px;line-height:24px;font-size:13.65px;color:#4b4b50;font-weight:normal;-webkit-text-stroke:0.25px currentColor;">Success</div>
<div class="t" style="left:716.00px;top:418.72px;height:24px;line-height:24px;font-size:15.6px;color:#52525b;font-weight:normal;">Please provide a s...</div>
<div class="t" style="left:877.30px;top:418.72px;height:24px;line-height:24px;font-size:15.5px;color:#52525b;font-weight:normal;">[ { "flagged": false...</div>
<div class="a" style="left:1038.5px;top:418.74px;width:147px;height:23.5px;border-radius:4px;background:#effcf7;border:1.2px solid #dfe6e3"></div>
<div class="t" style="left:1046.50px;top:419.02px;height:24px;line-height:24px;font-size:14.72px;color:#4b4b50;font-weight:normal;-webkit-text-stroke:0.2px currentColor;">text-moderation-007</div>
<div class="t" style="left:1253.00px;top:418.72px;height:24px;line-height:24px;font-size:15.6px;color:#52525b;font-weight:normal;">0</div>
<div class="t" style="left:1414.00px;top:418.72px;height:24px;line-height:24px;font-size:15.6px;color:#52525b;font-weight:normal;">0</div>
<div class="t" style="left:1575.20px;top:418.72px;height:24px;line-height:24px;font-size:15.6px;color:#52525b;font-weight:normal;">0</div>
<div class="t" style="left:1763.00px;top:418.72px;height:24px;line-height:24px;font-size:15.6px;color:#52525b;font-weight:normal;">1.024s</div>
<div class="a" style="left:1923px;top:418.54px;width:88.5px;height:24px;overflow:hidden"><div class="t" style="left:0.50px;top:0.18px;height:24px;line-height:24px;font-size:15.6px;color:#52525b;font-weight:normal;">26031f90-68</div>
</div>
<div class="a" style="left:391px;top:457.81px;width:1624px;height:1px;background:#e6e6e8"></div>
<div class="t" style="left:394.20px;top:475.39px;height:24px;line-height:24px;font-size:15.6px;color:#18181b;font-weight:normal;-webkit-text-stroke:0.2px currentColor;">May 29 10:20 AM</div>
<div class="a" style="left:609px;top:475.21px;width:68px;height:24.5px;border-radius:4px;background:#effbf5;border:1.2px solid #e1e4e2"></div>
<div class="t" style="left:616.80px;top:475.59px;height:24px;line-height:24px;font-size:13.65px;color:#4b4b50;font-weight:normal;-webkit-text-stroke:0.25px currentColor;">Success</div>
<div class="t" style="left:716.00px;top:475.39px;height:24px;line-height:24px;font-size:15.6px;color:#52525b;font-weight:normal;">I will now go direct...</div>
<div class="t" style="left:877.30px;top:475.39px;height:24px;line-height:24px;font-size:15.5px;color:#52525b;font-weight:normal;">Compulsory meat ...</div>
<div class="a" style="left:1038.5px;top:475.41px;width:138px;height:23.5px;border-radius:4px;background:#fbf8fd;border:1.2px solid #e6e1ea"></div>
<div class="t" style="left:1046.50px;top:475.69px;height:24px;line-height:24px;font-size:14.72px;color:#8a4fc6;font-weight:normal;-webkit-text-stroke:0.2px currentColor;">gpt-3.5-turbo-0125</div>
<div class="t" style="left:1253.00px;top:475.39px;height:24px;line-height:24px;font-size:15.6px;color:#52525b;font-weight:normal;">1646</div>
<div class="t" style="left:1414.00px;top:475.39px;height:24px;line-height:24px;font-size:15.6px;color:#52525b;font-weight:normal;">1585</div>
<div class="t" style="left:1575.20px;top:475.39px;height:24px;line-height:24px;font-size:15.6px;color:#52525b;font-weight:normal;">61</div>
<div class="t" style="left:1763.00px;top:475.39px;height:24px;line-height:24px;font-size:15.6px;color:#52525b;font-weight:normal;">2.238s</div>
<div class="a" style="left:1923px;top:475.21px;width:88.5px;height:24px;overflow:hidden"><div class="t" style="left:0.50px;top:0.18px;height:24px;line-height:24px;font-size:15.6px;color:#52525b;font-weight:normal;">b7c67919-35</div>
</div>
<div class="a" style="left:391px;top:514.48px;width:1624px;height:1px;background:#e6e6e8"></div>
<div class="t" style="left:394.20px;top:532.06px;height:24px;line-height:24px;font-size:15.6px;color:#18181b;font-weight:normal;-webkit-text-stroke:0.2px currentColor;">May 29 10:20 AM</div>
<div class="a" style="left:609px;top:531.88px;width:68px;height:24.5px;border-radius:4px;background:#effbf5;border:1.2px solid #e1e4e2"></div>
<div class="t" style="left:616.80px;top:532.26px;height:24px;line-height:24px;font-size:13.65px;color:#4b4b50;font-weight:normal;-webkit-text-stroke:0.25px currentColor;">Success</div>
<div class="t" style="left:716.00px;top:532.06px;height:24px;line-height:24px;font-size:15.6px;color:#52525b;font-weight:normal;">I will now go direct...</div>
<div class="t" style="left:877.30px;top:532.06px;height:24px;line-height:24px;font-size:15.5px;color:#52525b;font-weight:normal;">While cultural tradi...</div>
<div class="a" style="left:1038.5px;top:532.08px;width:138px;height:23.5px;border-radius:4px;background:#fbf8fd;border:1.2px solid #e6e1ea"></div>
<div class="t" style="left:1046.50px;top:532.36px;height:24px;line-height:24px;font-size:14.72px;color:#8a4fc6;font-weight:normal;-webkit-text-stroke:0.2px currentColor;">gpt-3.5-turbo-0125</div>
<div class="t" style="left:1253.00px;top:532.06px;height:24px;line-height:24px;font-size:15.6px;color:#52525b;font-weight:normal;">1572</div>
<div class="t" style="left:1414.00px;top:532.06px;height:24px;line-height:24px;font-size:15.6px;color:#52525b;font-weight:normal;">1490</div>
<div class="t" style="left:1575.20px;top:532.06px;height:24px;line-height:24px;font-size:15.6px;color:#52525b;font-weight:normal;">82</div>
<div class="t" style="left:1763.00px;top:532.06px;height:24px;line-height:24px;font-size:15.6px;color:#52525b;font-weight:normal;">1.982s</div>
<div class="a" style="left:1923px;top:531.88px;width:88.5px;height:24px;overflow:hidden"><div class="t" style="left:0.50px;top:0.18px;height:24px;line-height:24px;font-size:15.6px;color:#52525b;font-weight:normal;">b7c67919-35</div>
</div>
<div class="a" style="left:391px;top:571.15px;width:1624px;height:1px;background:#e6e6e8"></div>
<div class="t" style="left:394.20px;top:588.73px;height:24px;line-height:24px;font-size:15.6px;color:#18181b;font-weight:normal;-webkit-text-stroke:0.2px currentColor;">May 29 10:20 AM</div>
<div class="a" style="left:609px;top:588.55px;width:68px;height:24.5px;border-radius:4px;background:#effbf5;border:1.2px solid #e1e4e2"></div>
<div class="t" style="left:616.80px;top:588.93px;height:24px;line-height:24px;font-size:13.65px;color:#4b4b50;font-weight:normal;-webkit-text-stroke:0.25px currentColor;">Success</div>
<div class="t" style="left:716.00px;top:588.73px;height:24px;line-height:24px;font-size:15.6px;color:#52525b;font-weight:normal;">I will now go direct...</div>
<div class="t" style="left:877.30px;top:588.73px;height:24px;line-height:24px;font-size:15.5px;color:#52525b;font-weight:normal;">Compulsory meat ...</div>
<div class="a" style="left:1038.5px;top:588.75px;width:138px;height:23.5px;border-radius:4px;background:#fbf8fd;border:1.2px solid #e6e1ea"></div>
<div class="t" style="left:1046.50px;top:589.03px;height:24px;line-height:24px;font-size:14.72px;color:#8a4fc6;font-weight:normal;-webkit-text-stroke:0.2px currentColor;">gpt-3.5-turbo-0125</div>
<div class="t" style="left:1253.00px;top:588.73px;height:24px;line-height:24px;font-size:15.6px;color:#52525b;font-weight:normal;">1493</div>
<div class="t" style="left:1414.00px;top:588.73px;height:24px;line-height:24px;font-size:15.6px;color:#52525b;font-weight:normal;">1437</div>
<div class="t" style="left:1575.20px;top:588.73px;height:24px;line-height:24px;font-size:15.6px;color:#52525b;font-weight:normal;">56</div>
<div class="t" style="left:1763.00px;top:588.73px;height:24px;line-height:24px;font-size:15.6px;color:#52525b;font-weight:normal;">1.371s</div>
<div class="a" style="left:1923px;top:588.55px;width:88.5px;height:24px;overflow:hidden"><div class="t" style="left:0.50px;top:0.18px;height:24px;line-height:24px;font-size:15.6px;color:#52525b;font-weight:normal;">b7c67919-35</div>
</div>
<div class="a" style="left:391px;top:627.82px;width:1624px;height:1px;background:#e6e6e8"></div>
<div class="t" style="left:394.20px;top:645.40px;height:24px;line-height:24px;font-size:15.6px;color:#18181b;font-weight:normal;-webkit-text-stroke:0.2px currentColor;">May 29 10:20 AM</div>
<div class="a" style="left:609px;top:645.22px;width:68px;height:24.5px;border-radius:4px;background:#effbf5;border:1.2px solid #e1e4e2"></div>
<div class="t" style="left:616.80px;top:645.60px;height:24px;line-height:24px;font-size:13.65px;color:#4b4b50;font-weight:normal;-webkit-text-stroke:0.25px currentColor;">Success</div>
<div class="t" style="left:716.00px;top:645.40px;height:24px;line-height:24px;font-size:15.6px;color:#52525b;font-weight:normal;">I will now go direct...</div>
<div class="t" style="left:877.30px;top:645.40px;height:24px;line-height:24px;font-size:15.5px;color:#52525b;font-weight:normal;">Compulsory meat ...</div>
<div class="a" style="left:1038.5px;top:645.42px;width:138px;height:23.5px;border-radius:4px;background:#fbf8fd;border:1.2px solid #e6e1ea"></div>
<div class="t" style="left:1046.50px;top:645.70px;height:24px;line-height:24px;font-size:14.72px;color:#8a4fc6;font-weight:normal;-webkit-text-stroke:0.2px currentColor;">gpt-3.5-turbo-0125</div>
<div class="t" style="left:1253.00px;top:645.40px;height:24px;line-height:24px;font-size:15.6px;color:#52525b;font-weight:normal;">1424</div>
<div class="t" style="left:1414.00px;top:645.40px;height:24px;line-height:24px;font-size:15.6px;color:#52525b;font-weight:normal;">1336</div>
<div class="t" style="left:1575.20px;top:645.40px;height:24px;line-height:24px;font-size:15.6px;color:#52525b;font-weight:normal;">88</div>
<div class="t" style="left:1763.00px;top:645.40px;height:24px;line-height:24px;font-size:15.6px;color:#52525b;font-weight:normal;">1.816s</div>
<div class="a" style="left:1923px;top:645.22px;width:88.5px;height:24px;overflow:hidden"><div class="t" style="left:0.50px;top:0.18px;height:24px;line-height:24px;font-size:15.6px;color:#52525b;font-weight:normal;">b7c67919-35</div>
</div>
<div class="a" style="left:391px;top:684.49px;width:1624px;height:1px;background:#e6e6e8"></div>
<div class="t" style="left:394.20px;top:702.07px;height:24px;line-height:24px;font-size:15.6px;color:#18181b;font-weight:normal;-webkit-text-stroke:0.2px currentColor;">May 29 10:20 AM</div>
<div class="a" style="left:609px;top:701.89px;width:68px;height:24.5px;border-radius:4px;background:#effbf5;border:1.2px solid #e1e4e2"></div>
<div class="t" style="left:616.80px;top:702.27px;height:24px;line-height:24px;font-size:13.65px;color:#4b4b50;font-weight:normal;-webkit-text-stroke:0.25px currentColor;">Success</div>
<div class="t" style="left:716.00px;top:702.07px;height:24px;line-height:24px;font-size:15.6px;color:#52525b;font-weight:normal;">I will now go direct...</div>
<div class="t" style="left:877.30px;top:702.07px;height:24px;line-height:24px;font-size:15.5px;color:#52525b;font-weight:normal;">Compulsory meat ...</div>
<div class="a" style="left:1038.5px;top:702.09px;width:138px;height:23.5px;border-radius:4px;background:#fbf8fd;border:1.2px solid #e6e1ea"></div>
<div class="t" style="left:1046.50px;top:702.37px;height:24px;line-height:24px;font-size:14.72px;color:#8a4fc6;font-weight:normal;-webkit-text-stroke:0.2px currentColor;">gpt-3.5-turbo-0125</div>
<div class="t" style="left:1253.00px;top:702.07px;height:24px;line-height:24px;font-size:15.6px;color:#52525b;font-weight:normal;">1339</div>
<div class="t" style="left:1414.00px;top:702.07px;height:24px;line-height:24px;font-size:15.6px;color:#52525b;font-weight:normal;">1276</div>
<div class="t" style="left:1575.20px;top:702.07px;height:24px;line-height:24px;font-size:15.6px;color:#52525b;font-weight:normal;">63</div>
<div class="t" style="left:1763.00px;top:702.07px;height:24px;line-height:24px;font-size:15.6px;color:#52525b;font-weight:normal;">1.759s</div>
<div class="a" style="left:1923px;top:701.89px;width:88.5px;height:24px;overflow:hidden"><div class="t" style="left:0.50px;top:0.18px;height:24px;line-height:24px;font-size:15.6px;color:#52525b;font-weight:normal;">b7c67919-35</div>
</div>
<div class="a" style="left:391px;top:741.16px;width:1624px;height:1px;background:#e6e6e8"></div>
<div class="t" style="left:394.20px;top:758.74px;height:24px;line-height:24px;font-size:15.6px;color:#18181b;font-weight:normal;-webkit-text-stroke:0.2px currentColor;">May 29 10:20 AM</div>
<div class="a" style="left:609px;top:758.56px;width:68px;height:24.5px;border-radius:4px;background:#effbf5;border:1.2px solid #e1e4e2"></div>
<div class="t" style="left:616.80px;top:758.94px;height:24px;line-height:24px;font-size:13.65px;color:#4b4b50;font-weight:normal;-webkit-text-stroke:0.25px currentColor;">Success</div>
<div class="t" style="left:716.00px;top:758.74px;height:24px;line-height:24px;font-size:15.6px;color:#52525b;font-weight:normal;">I will now go direct...</div>
<div class="t" style="left:877.30px;top:758.74px;height:24px;line-height:24px;font-size:15.5px;color:#52525b;font-weight:normal;">Compulsory meat ...</div>
<div class="a" style="left:1038.5px;top:758.76px;width:138px;height:23.5px;border-radius:4px;background:#fbf8fd;border:1.2px solid #e6e1ea"></div>
<div class="t" style="left:1046.50px;top:759.04px;height:24px;line-height:24px;font-size:14.72px;color:#8a4fc6;font-weight:normal;-webkit-text-stroke:0.2px currentColor;">gpt-3.5-turbo-0125</div>
<div class="t" style="left:1253.00px;top:758.74px;height:24px;line-height:24px;font-size:15.6px;color:#52525b;font-weight:normal;">1263</div>
<div class="t" style="left:1414.00px;top:758.74px;height:24px;line-height:24px;font-size:15.6px;color:#52525b;font-weight:normal;">1165</div>
<div class="t" style="left:1575.20px;top:758.74px;height:24px;line-height:24px;font-size:15.6px;color:#52525b;font-weight:normal;">98</div>
<div class="t" style="left:1763.00px;top:758.74px;height:24px;line-height:24px;font-size:15.6px;color:#52525b;font-weight:normal;">2.619s</div>
<div class="a" style="left:1923px;top:758.56px;width:88.5px;height:24px;overflow:hidden"><div class="t" style="left:0.50px;top:0.18px;height:24px;line-height:24px;font-size:15.6px;color:#52525b;font-weight:normal;">b7c67919-35</div>
</div>
<div class="a" style="left:391px;top:797.83px;width:1624px;height:1px;background:#e6e6e8"></div>
<div class="t" style="left:394.20px;top:815.41px;height:24px;line-height:24px;font-size:15.6px;color:#18181b;font-weight:normal;-webkit-text-stroke:0.2px currentColor;">May 29 10:20 AM</div>
<div class="a" style="left:609px;top:815.23px;width:68px;height:24.5px;border-radius:4px;background:#effbf5;border:1.2px solid #e1e4e2"></div>
<div class="t" style="left:616.80px;top:815.61px;height:24px;line-height:24px;font-size:13.65px;color:#4b4b50;font-weight:normal;-webkit-text-stroke:0.25px currentColor;">Success</div>
<div class="t" style="left:716.00px;top:815.41px;height:24px;line-height:24px;font-size:15.6px;color:#52525b;font-weight:normal;">I will now go direct...</div>
<div class="t" style="left:877.30px;top:815.41px;height:24px;line-height:24px;font-size:15.5px;color:#52525b;font-weight:normal;">Compulsory meat ...</div>
<div class="a" style="left:1038.5px;top:815.43px;width:138px;height:23.5px;border-radius:4px;background:#fbf8fd;border:1.2px solid #e6e1ea"></div>
<div class="t" style="left:1046.50px;top:815.71px;height:24px;line-height:24px;font-size:14.72px;color:#8a4fc6;font-weight:normal;-webkit-text-stroke:0.2px currentColor;">gpt-3.5-turbo-0125</div>
<div class="t" style="left:1253.00px;top:815.41px;height:24px;line-height:24px;font-size:15.6px;color:#52525b;font-weight:normal;">1168</div>
<div class="t" style="left:1414.00px;top:815.41px;height:24px;line-height:24px;font-size:15.6px;color:#52525b;font-weight:normal;">1090</div>
<div class="t" style="left:1575.20px;top:815.41px;height:24px;line-height:24px;font-size:15.6px;color:#52525b;font-weight:normal;">78</div>
<div class="t" style="left:1763.00px;top:815.41px;height:24px;line-height:24px;font-size:15.6px;color:#52525b;font-weight:normal;">2.128s</div>
<div class="a" style="left:1923px;top:815.23px;width:88.5px;height:24px;overflow:hidden"><div class="t" style="left:0.50px;top:0.18px;height:24px;line-height:24px;font-size:15.6px;color:#52525b;font-weight:normal;">b7c67919-35</div>
</div>
<div class="a" style="left:391px;top:854.50px;width:1624px;height:1px;background:#e6e6e8"></div>
<div class="t" style="left:394.20px;top:872.08px;height:24px;line-height:24px;font-size:15.6px;color:#18181b;font-weight:normal;-webkit-text-stroke:0.2px currentColor;">May 29 10:20 AM</div>
<div class="a" style="left:609px;top:871.90px;width:68px;height:24.5px;border-radius:4px;background:#effbf5;border:1.2px solid #e1e4e2"></div>
<div class="t" style="left:616.80px;top:872.28px;height:24px;line-height:24px;font-size:13.65px;color:#4b4b50;font-weight:normal;-webkit-text-stroke:0.25px currentColor;">Success</div>
<div class="t" style="left:716.00px;top:872.08px;height:24px;line-height:24px;font-size:15.6px;color:#52525b;font-weight:normal;">I will now go direct...</div>
<div class="t" style="left:877.30px;top:872.08px;height:24px;line-height:24px;font-size:15.5px;color:#52525b;font-weight:normal;">Compulsory meat ...</div>
<div class="a" style="left:1038.5px;top:872.10px;width:138px;height:23.5px;border-radius:4px;background:#fbf8fd;border:1.2px solid #e6e1ea"></div>
<div class="t" style="left:1046.50px;top:872.38px;height:24px;line-height:24px;font-size:14.72px;color:#8a4fc6;font-weight:normal;-webkit-text-stroke:0.2px currentColor;">gpt-3.5-turbo-0125</div>
<div class="t" style="left:1253.00px;top:872.08px;height:24px;line-height:24px;font-size:15.6px;color:#52525b;font-weight:normal;">1077</div>
<div class="t" style="left:1414.00px;top:872.08px;height:24px;line-height:24px;font-size:15.6px;color:#52525b;font-weight:normal;">996</div>
<div class="t" style="left:1575.20px;top:872.08px;height:24px;line-height:24px;font-size:15.6px;color:#52525b;font-weight:normal;">81</div>
<div class="t" style="left:1763.00px;top:872.08px;height:24px;line-height:24px;font-size:15.6px;color:#52525b;font-weight:normal;">2.486s</div>
<div class="a" style="left:1923px;top:871.90px;width:88.5px;height:24px;overflow:hidden"><div class="t" style="left:0.50px;top:0.18px;height:24px;line-height:24px;font-size:15.6px;color:#52525b;font-weight:normal;">b7c67919-35</div>
</div>
<div class="a" style="left:391px;top:911.17px;width:1624px;height:1px;background:#e6e6e8"></div>
<div class="t" style="left:394.20px;top:928.75px;height:24px;line-height:24px;font-size:15.6px;color:#18181b;font-weight:normal;-webkit-text-stroke:0.2px currentColor;">May 29 10:20 AM</div>
<div class="a" style="left:609px;top:928.57px;width:68px;height:24.5px;border-radius:4px;background:#effbf5;border:1.2px solid #e1e4e2"></div>
<div class="t" style="left:616.80px;top:928.95px;height:24px;line-height:24px;font-size:13.65px;color:#4b4b50;font-weight:normal;-webkit-text-stroke:0.25px currentColor;">Success</div>
<div class="t" style="left:716.00px;top:928.75px;height:24px;line-height:24px;font-size:15.6px;color:#52525b;font-weight:normal;">Ok, I will now give ...</div>
<div class="t" style="left:877.30px;top:928.75px;height:24px;line-height:24px;font-size:15.5px;color:#52525b;font-weight:normal;">Mandating meat c...</div>
<div class="a" style="left:1038.5px;top:928.77px;width:138px;height:23.5px;border-radius:4px;background:#fbf8fd;border:1.2px solid #e6e1ea"></div>
<div class="t" style="left:1046.50px;top:929.05px;height:24px;line-height:24px;font-size:14.72px;color:#8a4fc6;font-weight:normal;-webkit-text-stroke:0.2px currentColor;">gpt-3.5-turbo-0125</div>
<div class="t" style="left:1253.00px;top:928.75px;height:24px;line-height:24px;font-size:15.6px;color:#52525b;font-weight:normal;">998</div>
<div class="t" style="left:1414.00px;top:928.75px;height:24px;line-height:24px;font-size:15.6px;color:#52525b;font-weight:normal;">926</div>
<div class="t" style="left:1575.20px;top:928.75px;height:24px;line-height:24px;font-size:15.6px;color:#52525b;font-weight:normal;">72</div>
<div class="t" style="left:1763.00px;top:928.75px;height:24px;line-height:24px;font-size:15.6px;color:#52525b;font-weight:normal;">1.71s</div>
<div class="a" style="left:1923px;top:928.57px;width:88.5px;height:24px;overflow:hidden"><div class="t" style="left:0.50px;top:0.18px;height:24px;line-height:24px;font-size:15.6px;color:#52525b;font-weight:normal;">b7c67919-35</div>
</div>
<div class="a" style="left:391px;top:967.84px;width:1624px;height:1px;background:#e6e6e8"></div>
<div class="t" style="left:394.20px;top:985.42px;height:24px;line-height:24px;font-size:15.6px;color:#18181b;font-weight:normal;-webkit-text-stroke:0.2px currentColor;">May 29 10:19 AM</div>
<div class="a" style="left:609px;top:985.24px;width:68px;height:24.5px;border-radius:4px;background:#effbf5;border:1.2px solid #e1e4e2"></div>
<div class="t" style="left:616.80px;top:985.62px;height:24px;line-height:24px;font-size:13.65px;color:#4b4b50;font-weight:normal;-webkit-text-stroke:0.25px currentColor;">Success</div>
<div class="t" style="left:716.00px;top:985.42px;height:24px;line-height:24px;font-size:15.6px;color:#52525b;font-weight:normal;">I will now go direct...</div>
<div class="t" style="left:877.30px;top:985.42px;height:24px;line-height:24px;font-size:15.5px;color:#52525b;font-weight:normal;">While animal welfa...</div>
<div class="a" style="left:1038.5px;top:985.44px;width:138px;height:23.5px;border-radius:4px;background:#fbf8fd;border:1.2px solid #e6e1ea"></div>
<div class="t" style="left:1046.50px;top:985.72px;height:24px;line-height:24px;font-size:14.72px;color:#8a4fc6;font-weight:normal;-webkit-text-stroke:0.2px currentColor;">gpt-3.5-turbo-0125</div>
<div class="t" style="left:1253.00px;top:985.42px;height:24px;line-height:24px;font-size:15.6px;color:#52525b;font-weight:normal;">915</div>
<div class="t" style="left:1414.00px;top:985.42px;height:24px;line-height:24px;font-size:15.6px;color:#52525b;font-weight:normal;">844</div>
<div class="t" style="left:1575.20px;top:985.42px;height:24px;line-height:24px;font-size:15.6px;color:#52525b;font-weight:normal;">71</div>
<div class="t" style="left:1763.00px;top:985.42px;height:24px;line-height:24px;font-size:15.6px;color:#52525b;font-weight:normal;">1.565s</div>
<div class="a" style="left:1923px;top:985.24px;width:88.5px;height:24px;overflow:hidden"><div class="t" style="left:0.50px;top:0.18px;height:24px;line-height:24px;font-size:15.6px;color:#52525b;font-weight:normal;">b7c67919-35</div>
</div>
</div></div>
<div class="a" style="left:89px;top:1017.5px;width:1958px;height:1.5px;background:#111"></div>
</body></html>
